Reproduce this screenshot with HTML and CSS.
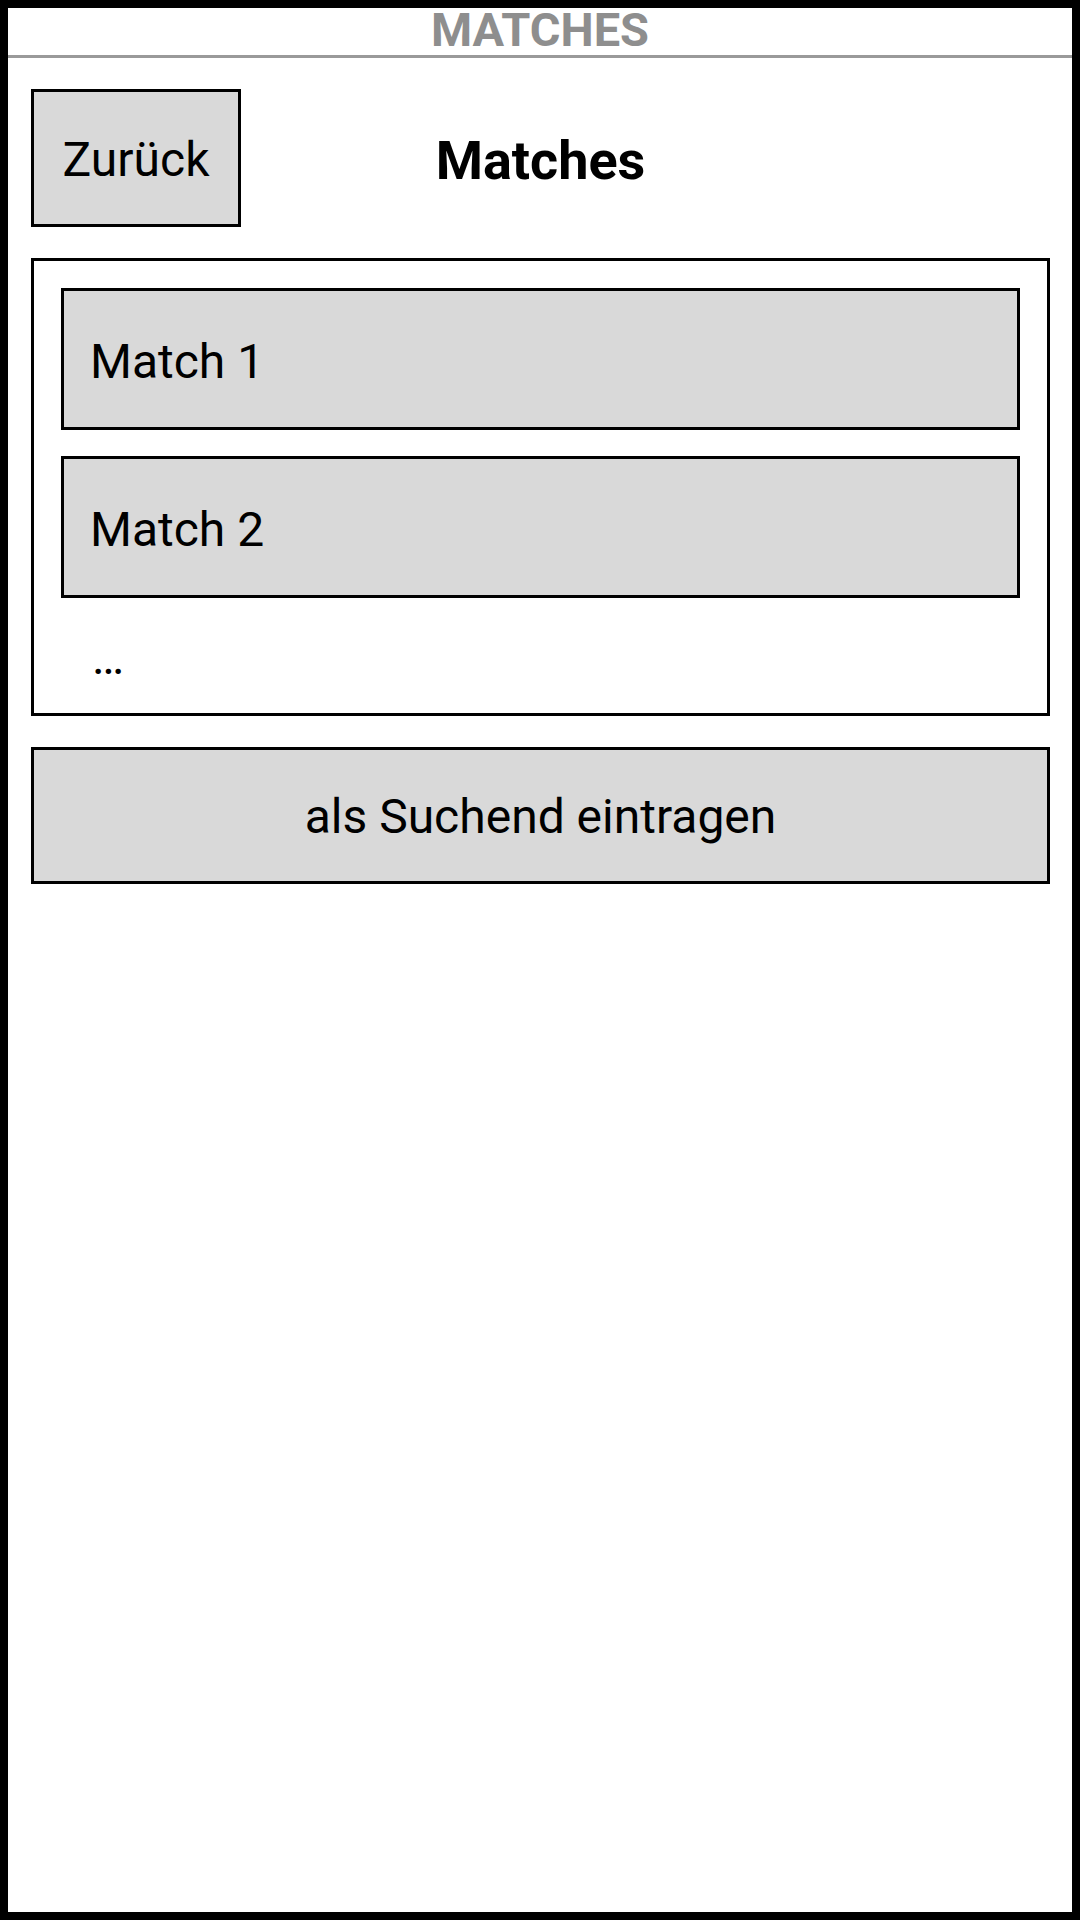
FILE: index.html
```html
<!DOCTYPE html>
<html lang="de">
<head>
<meta charset="utf-8">
<title>Matches</title>
<link rel="stylesheet" href="styles.css">
</head>
<body>
<div class="frame">
  <header class="screen-title">MATCHES</header>
  <main class="content">
    <div class="top-row">
      <button class="btn back-btn">Zurück</button>
      <h1 class="page-title">Matches</h1>
      <div class="spacer"></div>
    </div>
    <section class="match-list">
      <div class="match-item">Match 1</div>
      <div class="match-item">Match 2</div>
      <div class="more">…</div>
    </section>
    <button class="btn wide-btn">als Suchend eintragen</button>
  </main>
</div>
</body>
</html>
```

FILE: styles.css
```css
* {
  box-sizing: border-box;
}
html, body {
  margin: 0;
  padding: 0;
  background: #ffffff;
}
body {
  font-family: Roboto, "Liberation Sans", sans-serif;
  color: #000;
}
.frame {
  width: 1080px;
  height: 1920px;
  border: 8px solid #000;
  background: #fff;
  display: flex;
  flex-direction: column;
}
.screen-title {
  height: 50px;
  line-height: 44px;
  text-align: center;
  font-size: 47px;
  font-weight: 700;
  color: #8e8e8e;
  border-bottom: 3px solid #9a9a9a;
}
.content {
  padding: 31px 22px 0 23px;
  display: flex;
  flex-direction: column;
  gap: 31px;
}
.top-row {
  display: grid;
  grid-template-columns: 1fr auto 1fr;
  align-items: center;
  height: 138px;
}
.btn {
  font-family: Roboto, "Liberation Sans", sans-serif;
  font-size: 48px;
  font-weight: 400;
  color: #000;
  background: #d9d9d9;
  border: 3px solid #000;
  border-radius: 0;
  padding: 0;
  margin: 0;
}
.back-btn {
  width: 210px;
  height: 138px;
  justify-self: start;
  padding-top: 2px;
}
.page-title {
  margin: 0;
  padding-top: 6px;
  font-size: 54px;
  font-weight: 700;
  line-height: 60px;
}
.match-list {
  border: 3px solid #000;
  padding: 27px 27px 27px 27px;
  display: flex;
  flex-direction: column;
  gap: 26px;
}
.match-item {
  height: 142px;
  background: #d9d9d9;
  border: 3px solid #000;
  display: flex;
  align-items: center;
  padding: 4px 0 0 26px;
  font-size: 48px;
  color: #000;
}
.more {
  height: 62px;
  padding: 6px 0 0 31px;
  line-height: 56px;
  font-size: 48px;
  color: #000;
}
.wide-btn {
  width: 100%;
  height: 137px;
  padding-top: 2px;
}
```
